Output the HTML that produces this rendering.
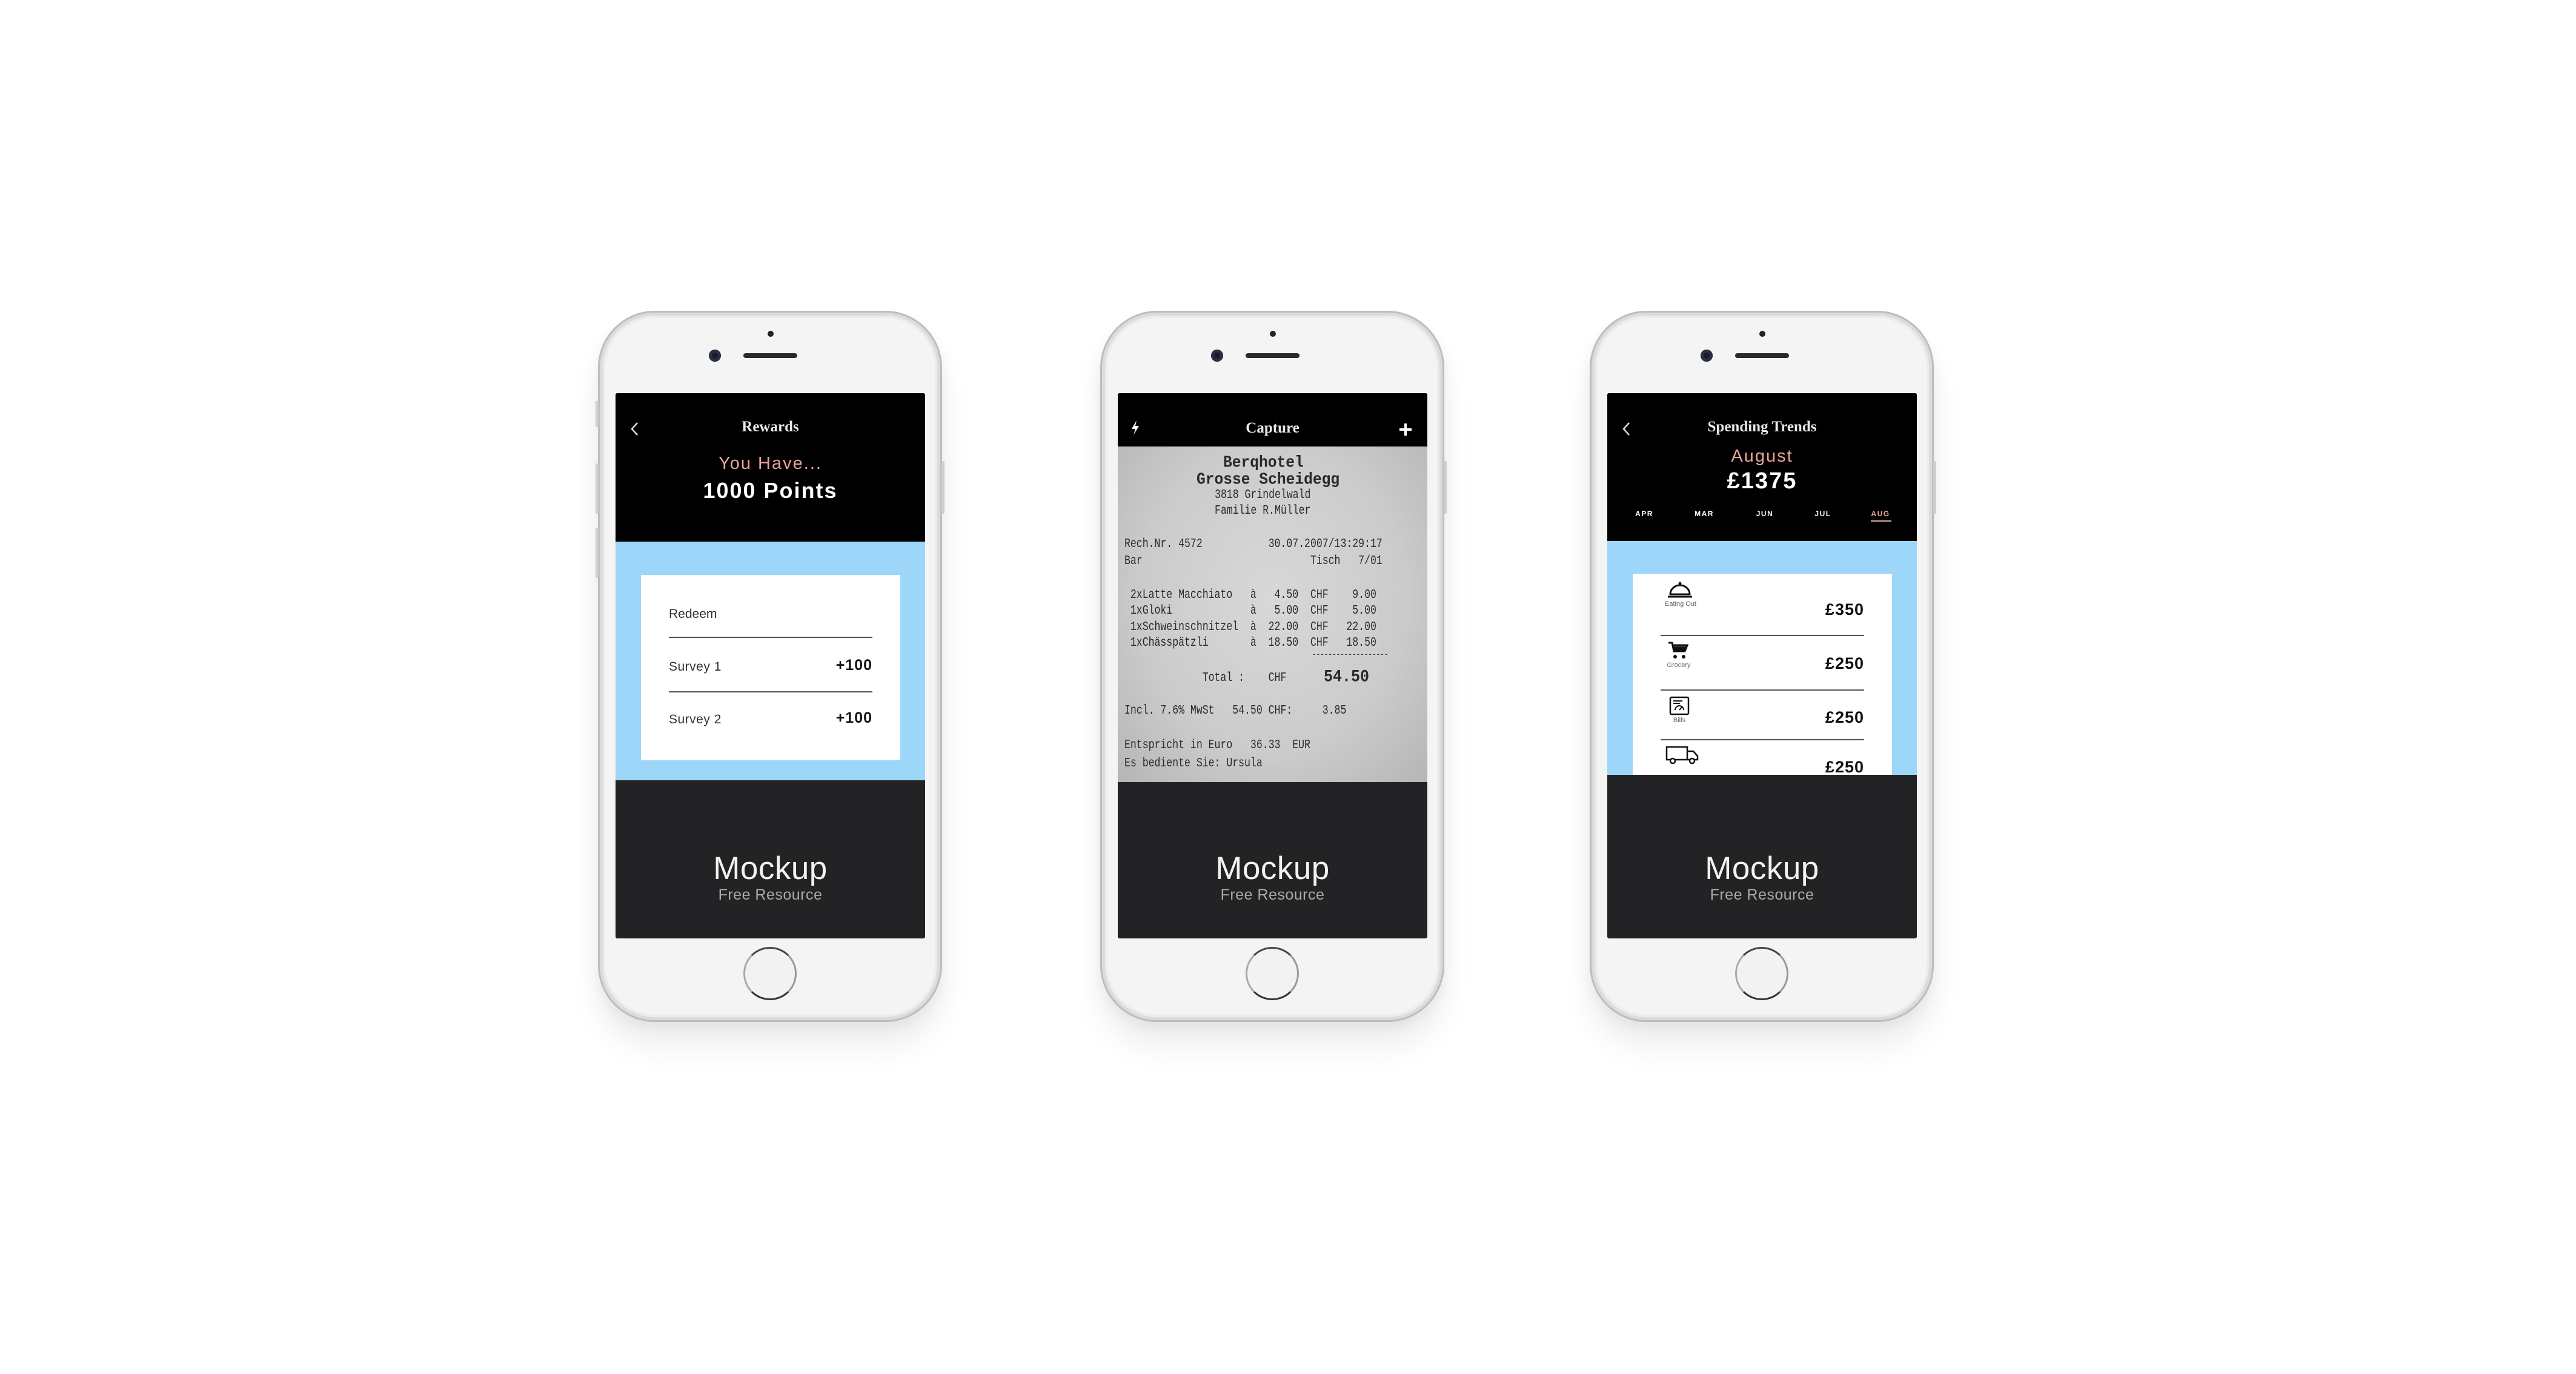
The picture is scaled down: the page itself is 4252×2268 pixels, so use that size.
<!DOCTYPE html>
<html><head><meta charset="utf-8"><style>
*{margin:0;padding:0;box-sizing:border-box}
body{width:4252px;height:2268px;background:#fff;position:relative;overflow:hidden;font-family:"Liberation Sans",sans-serif}
.phone{position:absolute;top:513px;width:568px;height:1174px;border-radius:94px;background:#f4f4f4;
box-shadow:inset 0 0 0 3px #bdbdbd,inset 0 0 0 8px #dcdcdc,inset 0 0 0 12px #ececec,0 40px 50px rgba(0,0,0,0.07),0 10px 20px rgba(0,0,0,0.05)}
.btn{position:absolute;width:5px;background:#cfcfcf;border-radius:2px}
.cam{position:absolute;left:183px;top:64px;width:20px;height:20px;border-radius:50%;background:#1a1d26;box-shadow:inset 0 0 0 5px #2a2f45}
.spk{position:absolute;left:240px;top:70px;width:89px;height:8px;border-radius:4px;background:#2a2a2a}
.dot{position:absolute;left:280px;top:33px;width:10px;height:10px;border-radius:50%;background:#222}
.home{position:absolute;left:240px;top:1050px;width:88px;height:88px;border-radius:50%;border:3px solid #555;border-color:#444 #999 #333 #aaa;background:#f2f2f2}
.screen{position:absolute;left:29px;top:136px;width:511px;height:900px;background:#232325;overflow:hidden;border-radius:3px}
.hdr{position:absolute;left:0;top:0;width:511px;background:#000;color:#fff;text-align:center}
.t{position:absolute;left:0;width:100%;text-align:center}
.serif{font-family:"Liberation Serif",serif;font-weight:bold;font-size:25px;color:#e8e8e8}
.pink{color:#e9a59c;letter-spacing:2px}
.blue{position:absolute;left:0;width:511px;background:#9dd6f9}
.card{position:absolute;left:42px;width:428px;background:#fff}
.line{position:absolute;left:46px;width:336px;height:2px;background:#555}
.mk{position:absolute;left:0;width:511px;text-align:center;color:#f2f2f2;font-size:53px;top:754px;letter-spacing:0.5px}
.fr{position:absolute;left:0;width:511px;text-align:center;color:#aaa;font-size:25px;top:814px;letter-spacing:0.5px}
.chev{position:absolute;left:22px;top:46px}
.rc{position:absolute;left:0;top:88px;width:511px;height:554px;background:radial-gradient(ellipse at 50% 45%,#d8d8d8 0%,#cbcbcb 60%,#b5b5b5 100%)}
.m{position:absolute;font-family:"Liberation Mono",monospace;white-space:pre;color:#2a2a2a;font-size:16.5px;transform:scaleY(1.3);transform-origin:0 50%;line-height:1}
.amt{position:absolute;right:46px;font-weight:bold;font-size:27px;color:#111;letter-spacing:1px}
.lab{position:absolute;font-size:11px;color:#666;text-align:center;width:90px}
</style></head><body>

<!-- Phone 1 -->
<div class="phone" style="left:987px">
 <div class="btn" style="left:-4px;top:149px;height:43px"></div>
 <div class="btn" style="left:-4px;top:252px;height:83px"></div>
 <div class="btn" style="left:-4px;top:358px;height:83px"></div>
 <div class="btn" style="left:567px;top:248px;height:87px"></div>
 <div class="dot"></div><div class="cam"></div><div class="spk"></div>
 <div class="screen">
  <div class="hdr" style="height:245px">
   <svg class="chev" width="20" height="26" viewBox="0 0 20 26"><path d="M14 3 L5 13 L14 23" stroke="#ddd" stroke-width="2.5" fill="none"/></svg>
   <div class="t serif" style="top:42px">Rewards</div>
   <div class="t pink" style="top:100px;font-size:29px">You Have...</div>
   <div class="t" style="top:140px;font-size:36px;font-weight:bold;letter-spacing:2px">1000 Points</div>
  </div>
  <div class="blue" style="top:245px;height:394px"></div>
  <div class="card" style="top:300px;height:306px">
   <div style="position:absolute;left:46px;top:53px;font-size:21px;color:#333">Redeem</div>
   <div class="line" style="top:102px"></div>
   <div style="position:absolute;left:46px;top:140px;font-size:21px;color:#333;letter-spacing:0.5px">Survey 1</div>
   <div style="position:absolute;right:46px;top:135px;font-size:25px;font-weight:bold;color:#111;letter-spacing:1px">+100</div>
   <div class="line" style="top:192px"></div>
   <div style="position:absolute;left:46px;top:227px;font-size:21px;color:#333;letter-spacing:0.5px">Survey 2</div>
   <div style="position:absolute;right:46px;top:222px;font-size:25px;font-weight:bold;color:#111;letter-spacing:1px">+100</div>
  </div>
  <div class="mk">Mockup</div><div class="fr">Free Resource</div>
 </div>
 <div class="home"></div>
</div>

<!-- Phone 2 -->
<div class="phone" style="left:1816px">
 <div class="btn" style="left:567px;top:248px;height:87px"></div>
 <div class="dot"></div><div class="cam"></div><div class="spk"></div>
 <div class="screen">
  <div class="hdr" style="height:88px">
   <svg style="position:absolute;left:20px;top:44px" width="18" height="26" viewBox="0 0 18 26"><path d="M11 1 L3 15 L9 15 L6 25 L15 10 L9 10 Z" fill="#fff"/></svg>
   <div class="t serif" style="top:44px">Capture</div>
   <svg style="position:absolute;left:463px;top:48px" width="24" height="24" viewBox="0 0 24 24"><path d="M12 2V22M2 12H22" stroke="#fff" stroke-width="4"/></svg>
  </div>
  <div class="rc">
   <div class="m" style="left:174px;top:16px;font-size:24.6px;font-weight:bold;transform:scaleY(1.1)">Berqhotel</div>
   <div class="m" style="left:130px;top:44px;font-size:24.6px;font-weight:bold;transform:scaleY(1.1)">Grosse Scheidegg</div>
   <div class="m" style="left:160px;top:72px">3818 Grindelwald</div>
   <div class="m" style="left:160px;top:98px">Familie R.Müller</div>
   <div class="m" style="left:11px;top:153px">Rech.Nr. 4572           30.07.2007/13:29:17</div>
   <div class="m" style="left:11px;top:181px">Bar                            Tisch   7/01</div>
   <div class="m" style="left:11px;top:237px"> 2xLatte Macchiato   à   4.50  CHF    9.00</div>
   <div class="m" style="left:11px;top:263px"> 1xGloki             à   5.00  CHF    5.00</div>
   <div class="m" style="left:11px;top:290px"> 1xSchweinschnitzel  à  22.00  CHF   22.00</div>
   <div class="m" style="left:11px;top:316px"> 1xChässpätzli       à  18.50  CHF   18.50</div>
   <div class="m" style="left:321px;top:340px;font-size:11px">-------------------</div>
   <div class="m" style="left:11px;top:374px">             Total :    CHF</div>
   <div class="m" style="left:340px;top:368px;font-size:25px;font-weight:bold;transform:scaleY(1.1)">54.50</div>
   <div class="m" style="left:11px;top:428px">Incl. 7.6% MwSt   54.50 CHF:     3.85</div>
   <div class="m" style="left:11px;top:485px">Entspricht in Euro   36.33  EUR</div>
   <div class="m" style="left:11px;top:515px">Es bediente Sie: Ursula</div>
  </div>
  <div class="mk">Mockup</div><div class="fr">Free Resource</div>
 </div>
 <div class="home"></div>
</div>

<!-- Phone 3 -->
<div class="phone" style="left:2624px">
 <div class="btn" style="left:567px;top:248px;height:87px"></div>
 <div class="dot"></div><div class="cam"></div><div class="spk"></div>
 <div class="screen">
  <div class="hdr" style="height:244px">
   <svg class="chev" width="20" height="26" viewBox="0 0 20 26"><path d="M14 3 L5 13 L14 23" stroke="#ddd" stroke-width="2.5" fill="none"/></svg>
   <div class="t serif" style="top:42px">Spending Trends</div>
   <div class="t pink" style="top:88px;font-size:29px">August</div>
   <div class="t" style="top:124px;font-size:38px;font-weight:bold;letter-spacing:2px">£1375</div>
   <div style="position:absolute;left:41px;top:192px;width:40px;text-align:center;font-size:12px;font-weight:bold;letter-spacing:1.5px">APR</div>
   <div style="position:absolute;left:140px;top:192px;width:40px;text-align:center;font-size:12px;font-weight:bold;letter-spacing:1.5px">MAR</div>
   <div style="position:absolute;left:240px;top:192px;width:40px;text-align:center;font-size:12px;font-weight:bold;letter-spacing:1.5px">JUN</div>
   <div style="position:absolute;left:336px;top:192px;width:40px;text-align:center;font-size:12px;font-weight:bold;letter-spacing:1.5px">JUL</div>
   <div style="position:absolute;left:431px;top:192px;width:40px;text-align:center;font-size:12px;font-weight:bold;letter-spacing:1.5px;color:#e9a59c">AUG</div>
   <div style="position:absolute;left:435px;top:210px;width:34px;height:2px;background:#e9a59c"></div>
  </div>
  <div class="blue" style="top:244px;height:386px"></div>
  <div class="card" style="top:298px;height:332px;overflow:hidden">
   <svg style="position:absolute;left:56px;top:12px" width="44" height="30" viewBox="0 0 44 30"><circle cx="22" cy="4" r="2.5" fill="#111"/><path d="M6 22 A16 15 0 0 1 38 22 Z" fill="none" stroke="#111" stroke-width="3"/><path d="M2 26H42" stroke="#111" stroke-width="3"/></svg>
   <div class="lab" style="left:34px;top:44px">Eating Out</div>
   <div class="amt" style="top:44px">£350</div>
   <div class="line" style="top:101px"></div>
   <svg style="position:absolute;left:58px;top:112px" width="36" height="30" viewBox="0 0 36 30"><path d="M1 2H7L10 16H28L32 6H8" fill="none" stroke="#111" stroke-width="3"/><path d="M9 8H31L28 16H10Z" fill="#111"/><circle cx="12" cy="25" r="3" fill="#111"/><circle cx="26" cy="25" r="3" fill="#111"/></svg>
   <div class="lab" style="left:31px;top:145px">Grocery</div>
   <div class="amt" style="top:133px">£250</div>
   <div class="line" style="top:191px"></div>
   <svg style="position:absolute;left:60px;top:202px" width="34" height="32" viewBox="0 0 34 32"><rect x="2" y="2" width="30" height="28" rx="2" fill="none" stroke="#111" stroke-width="2.5"/><path d="M7 8H22M7 12H18" stroke="#111" stroke-width="2"/><path d="M10 23 A7 7 0 0 1 24 23" fill="none" stroke="#111" stroke-width="2"/><path d="M17 23L21 18" stroke="#111" stroke-width="2"/></svg>
   <div class="lab" style="left:32px;top:236px">Bills</div>
   <div class="amt" style="top:222px">£250</div>
   <div class="line" style="top:273px"></div>
   <svg style="position:absolute;left:54px;top:283px" width="56" height="32" viewBox="0 0 56 32"><path d="M2 3H36V24H2Z M36 10H46L53 18V24H36" fill="none" stroke="#111" stroke-width="2.5"/><circle cx="12" cy="26" r="4" fill="#fff" stroke="#111" stroke-width="2.5"/><circle cx="44" cy="26" r="4" fill="#fff" stroke="#111" stroke-width="2.5"/></svg>
   <div class="amt" style="top:304px">£250</div>
  </div>
  <div class="mk">Mockup</div><div class="fr">Free Resource</div>
 </div>
 <div class="home"></div>
</div>

</body></html>
